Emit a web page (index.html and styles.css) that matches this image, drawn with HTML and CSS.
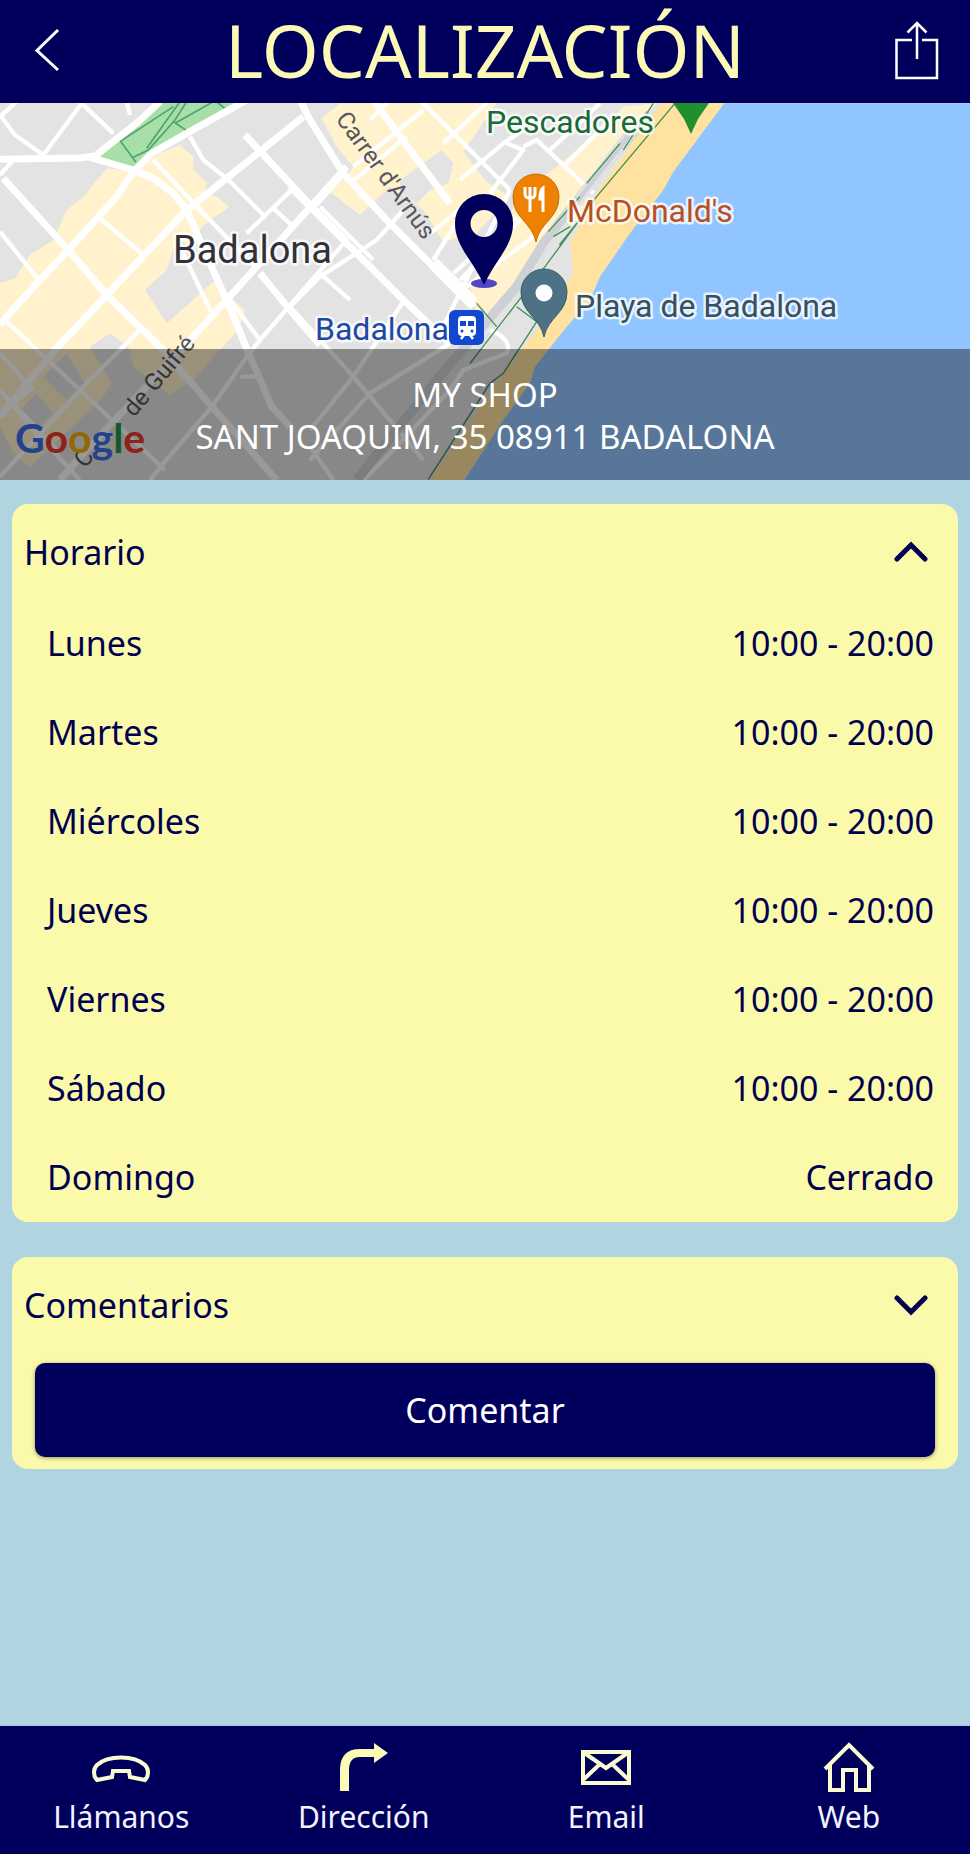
FILE: index.html
```html
<!DOCTYPE html>
<html lang="es">
<head>
	<meta charset="utf-8">
	<meta name="viewport" content="width=device-width, initial-scale=1">
	<title>Localización</title>
	<link rel="stylesheet" href="styles.css">
</head>
<body>

<header class="topbar">
	<button type="button" class="topbar-button" aria-label="Volver">
		<svg width="96" height="103" viewBox="0 0 96 103"><path d="M58 30L37 50.500L58 70" stroke-width="3"/></svg>
	</button>
	<h1>LOCALIZACIÓN</h1>
	<button type="button" class="topbar-button" aria-label="Compartir">
		<svg width="96" height="103" viewBox="0 0 96 103"><path d="M38 40H22.500V78H63V40H48M43 59V23M33.500 32.500L43 23L52.500 32.500" stroke-width="2.500"/></svg>
	</button>
</header>

<main>
	<section class="location">
		<svg class="map" viewBox="0 103 970 377" preserveAspectRatio="xMidYMid slice" role="img" aria-label="Mapa">
			<rect class="land" y="100" width="970" height="384"/>

			<!-- Old town -->
			<g transform="translate(0 100) scale(.33333)">
				<path class="block" d="M0 550L45 535L90 465L160 420L200 330L250 290L320 205L395 215L480 160L540 135L580 170L580 210L620 245L615 275L650 290L688 320L605 380L580 440L530 420L500 510L435 570L500 670L640 545L735 630L715 690L650 760L590 830L510 885L400 800L385 740L330 700L270 740L335 850L310 890L260 940L90 1100L40 1060L0 980Z"/>
				<path class="unblock" d="M130 830L200 760L255 850L200 900ZM60 930L110 880L160 940L110 990Z"/>
				<path class="park" d="M285 172L420 65L480 5H740L560 100L455 160L405 202Z"/>
				<path class="park-path" d="M350 108L408 187M360 125L520 20M400 172L445 150L525 60L560 5M440 145L540 5M520 65L560 92M525 70L640 5M650 5L680 30"/>
				<g class="street">
					<path class="wide" d="M0 178L240 174L285 168L410 70L480 5M270 172L400 210L460 235L520 280L560 330L625 480L680 600L740 745L815 920L870 980"/>
					<path class="wide" d="M740 0L560 100L455 160L400 215L350 290L205 450L120 540L15 655L0 675M910 50L680 235L560 330L320 585L165 750L40 900L0 950"/>
					<path class="wide" d="M10 235L205 450L320 585L480 740L640 925L830 1140M735 105L935 320L1040 425M1040 200L860 400L680 600L570 720L420 880L250 1060L180 1140M780 520L870 630L960 735"/>
					<path d="M0 45L45 105L130 165L245 10M0 50L50 5M245 10L340 100M380 5L390 45M0 225L40 180M0 395L120 545M300 355L430 465M425 685L250 860L0 1130M420 685L490 750M15 660L240 870L495 1110M0 760L95 865L40 910L180 1060M0 870L100 990L240 1140M460 180L600 330L770 505M570 110L610 180L680 235L790 345M885 260L740 400M820 325L880 380M540 440L635 640M690 600L780 720M1040 420L780 720L740 770L640 915L490 1090L450 1140M960 520L1050 600M720 830H780"/>
				</g>
			</g>

			<!-- Sea front -->
			<g transform="translate(290 100) scale(.33333)">
				<path class="block" d="M95 55L150 10H620L520 155L590 245L660 290L560 400L460 425L400 330L300 260L210 345L120 275L165 235L190 200L140 140ZM700 270L800 200L930 90L1000 20L1100 10L700 500L560 640L540 560Z"/>
				<path class="unblock" d="M330 240L455 150L490 190L475 250L420 270L380 310L330 280ZM690 150L730 130L780 190L730 215L695 200ZM640 10H930L820 150L760 120L700 120Z"/>
				<path class="sand" d="M1110 10H1310L1220 130L1140 250L1000 430L925 540L850 690L720 850L520 1140H420L640 820L740 690L850 520L840 430L920 280Z"/>
				<path class="sea" d="M1303 10L1150 215L1120 270L1020 400L930 530L900 600L830 680L735 800L720 850L640 960L520 1145H2100V10Z"/>
				<path class="land" d="M680 620L735 655V690L640 820L520 970L410 1130H190L450 850Z"/>
				<g class="street">
					<path class="wide" d="M30 0L60 60L160 220L290 360L440 510L550 620M0 260L170 430L340 600L480 730M160 220L60 330M250 0L330 110L480 310"/>
					<path class="huge" d="M430 490L550 610"/>
					<path d="M340 330L260 420L90 530L0 620M250 480L90 320M340 605L190 830L60 990M0 620L190 830L400 1080M480 730L240 880L60 1080M190 200L400 30M180 250L350 110M240 60L300 0M390 0L510 120L660 270M460 130L600 0M510 240L640 130L700 90M700 140L740 120L910 280M650 130L700 150L600 280M930 10L780 150M960 60L820 200M420 400L520 320M430 480L510 350M510 540L710 340M530 560L770 380M490 520L680 350M450 700L660 270M600 690Q670 720 650 760L520 810L480 870L300 1060L220 1140M60 1040L130 1140"/>
				</g>
				<path class="block" d="M570 600L680 480L850 300L880 320L790 420L620 620L590 650Z"/>
				<path class="rail" d="M1080 40L910 240L760 430L680 560L440 840L200 1140"/>
				<path class="rail thin" d="M1110 10L900 270L750 480M1020 80L860 290"/>
				<path class="footpath" d="M1155 10L920 290L765 500M990 130L890 250M870 290L775 395M860 370L808 435M840 380L790 410M765 500L540 790M560 610L620 680M680 620L740 665L640 820L600 850L415 1138M1000 150L1090 10"/>
			</g>

			<g class="map-label">
				<text class="street-name" transform="translate(335 119) rotate(54)">Carrer d'Arnús</text>
				<text class="street-name" transform="translate(85 469) rotate(-50)">C</text>
				<text class="street-name" transform="translate(134 418) rotate(-50)">de Guifré</text>
				<text class="city" x="173" y="263">Badalona</text>
				<text class="green" x="486" y="133">Pescadores</text>
				<text class="orange" x="567" y="222">McDonald's</text>
				<text class="slate" x="575" y="317">Playa de Badalona</text>
				<text class="blue" x="315" y="340">Badalona</text>
			</g>

			<!-- Station -->
			<rect x="449" y="310" width="35" height="35" rx="6" fill="#1248cf"/>
			<rect x="458" y="316" width="18" height="20" rx="4" fill="#fff"/>
			<path d="M460 321H466V326H460ZM468 321H474V326H468Z" fill="#1248cf"/>
			<circle cx="462" cy="331" r="1.500" fill="#1248cf"/>
			<circle cx="472" cy="331" r="1.500" fill="#1248cf"/>
			<path d="M461 339L464 335M473 339L470 335" stroke="#fff" stroke-width="2.500"/>

			<!-- Pins -->
			<path d="M673 103H709L698 119L691 134L684 119Z" fill="#228f2f"/>
			<path d="M536 174A23 23 0 0 0 513 197C513 218 532 222 536 242C540 222 559 218 559 197A23 23 0 0 0 536 174Z" fill="#ee8100" stroke="#c66b08"/>
			<path d="M525 187V194Q525 198 530 198Q535 198 535 194V187M530 187V212M543 212V188Q540 190 540 199H543" fill="none" stroke="#fff" stroke-width="3"/>
			<path d="M544 269A23 23 0 0 0 521 292C521 313 540 317 544 337C548 317 567 313 567 292A23 23 0 0 0 544 269Z" fill="#4d7185" stroke="#395b6c"/>
			<circle cx="544" cy="293" r="8.500" fill="#fff"/>
			<ellipse cx="484" cy="283.500" rx="13" ry="4.500" fill="#5146c4"/>
			<path fill-rule="evenodd" d="M484 194A29 29 0 0 0 455 224C455 246 474 262 484 285C494 262 513 246 513 224A29 29 0 0 0 484 194ZM484 210A13.500 13.500 0 1 1 484 237A13.500 13.500 0 1 1 484 210Z" fill="#00005c"/>

			<text class="brand" x="15" y="453"><tspan fill="#3d6fe8">G</tspan><tspan fill="#ea3a2c">o</tspan><tspan fill="#f5ae05">o</tspan><tspan fill="#3d6fe8">g</tspan><tspan fill="#259545">l</tspan><tspan fill="#ea3a2c">e</tspan></text>
		</svg>
		<address class="address">MY SHOP<br>SANT JOAQUIM, 35 08911 BADALONA</address>
	</section>

	<div class="cards">
		<section class="card">
			<h2>
				<button type="button" class="card-toggle" aria-expanded="true">Horario
					<svg width="34" height="22" viewBox="0 0 34 22"><path d="M3 18L17 4L31 18"/></svg>
				</button>
			</h2>
			<table class="hours">
				<tr><th scope="row">Lunes</th><td>10:00 - 20:00</td></tr>
				<tr><th scope="row">Martes</th><td>10:00 - 20:00</td></tr>
				<tr><th scope="row">Miércoles</th><td>10:00 - 20:00</td></tr>
				<tr><th scope="row">Jueves</th><td>10:00 - 20:00</td></tr>
				<tr><th scope="row">Viernes</th><td>10:00 - 20:00</td></tr>
				<tr><th scope="row">Sábado</th><td>10:00 - 20:00</td></tr>
				<tr><th scope="row">Domingo</th><td>Cerrado</td></tr>
			</table>
		</section>

		<section class="card">
			<h2>
				<button type="button" class="card-toggle" aria-expanded="false">Comentarios
					<svg width="34" height="22" viewBox="0 0 34 22"><path d="M3 4L17 18L31 4"/></svg>
				</button>
			</h2>
			<button type="button" class="comment-button">Comentar</button>
		</section>
	</div>
</main>

<nav class="actions">
	<a href="#llamar">
		<svg width="60" height="52" viewBox="0 0 60 52"><path class="line" d="M6 38C2 34 2 27 6 23C17 13 43 13 54 23C58 27 58 34 54 38L39 35L38 29H22L21 35Z"/></svg>
		Llámanos
	</a>
	<a href="#direccion">
		<svg width="60" height="52" viewBox="0 0 60 52"><path class="solid" d="M6 49V28Q6 7 26 7H40V1L54 11L40 21V15H26Q15 15 15 28V49Z"/></svg>
		Dirección
	</a>
	<a href="#email">
		<svg width="60" height="52" viewBox="0 0 60 52"><path class="line" d="M7 10H53V41H7ZM7 10L30 26L53 10M7 38L24 22M53 38L36 22"/></svg>
		Email
	</a>
	<a href="#web">
		<svg width="60" height="52" viewBox="0 0 60 52"><path class="line" d="M6 27L30 3L54 27M11 23V48H24V28H37V48H50V23"/></svg>
		Web
	</a>
</nav>

</body>
</html>
```
FILE: styles.css
```css
* {
	box-sizing: border-box;
}

body {
	display: flex;
	flex-direction: column;
	min-height: 100vh;
	margin: 0;
	background: #b0d5e1;
	color: #00004f;
	font-family: "Noto Sans", sans-serif;
	font-size: 34px;
}

button {
	margin: 0;
	padding: 0;
	border: 0;
	background: none;
	color: inherit;
	font: inherit;
}

/* Header */
.topbar {
	display: flex;
	justify-content: space-between;
	height: 103px;
	background: #00005c;
}

.topbar h1 {
	margin: 0;
	color: #fbf9b5;
	font-size: 73px;
	font-weight: normal;
	line-height: 100px;
}

.topbar-button svg {
	display: block;
	fill: none;
	stroke: #fff;
}

main {
	flex: 1;
}

/* Map */
.location {
	position: relative;
}

.map {
	display: block;
	width: 100%;
	height: 377px;
}

.land,
.unblock {
	fill: #e3e3e4;
}

.block {
	fill: #fff2cc;
}

.park {
	fill: #a8dfa8;
}

.park-path {
	fill: none;
	stroke: #4fa36c;
	stroke-width: 5;
}

.sand {
	fill: #ffe2a0;
}

.sea {
	fill: #91c5ff;
}

.street {
	fill: none;
	stroke: #fff;
	stroke-width: 13;
	stroke-linejoin: round;
}

.street .wide {
	stroke-width: 21;
}

.street .huge {
	stroke-width: 38;
}

.rail {
	fill: none;
	stroke: #cdd0d4;
	stroke-width: 28;
}

.rail.thin {
	stroke: #e1e2e4;
	stroke-width: 8;
}

.footpath {
	fill: none;
	stroke: #3f9155;
	stroke-width: 4;
}

.map-label {
	font-family: Roboto, sans-serif;
	font-size: 32px;
	paint-order: stroke;
	stroke: rgba(255, 255, 255, .8);
	stroke-width: 5px;
	stroke-linejoin: round;
}

.street-name {
	fill: #55585c;
	stroke: none;
	font-size: 24px;
}

.city {
	fill: #303237;
	font-size: 38px;
}

.green {
	fill: #176b35;
}

.orange {
	fill: #b9501c;
}

.slate {
	fill: #35505e;
}

.blue {
	fill: #1c49a5;
}

.brand {
	font-family: Lato, sans-serif;
	font-size: 41px;
	font-weight: bold;
}

.address {
	position: absolute;
	right: 0;
	bottom: 0;
	left: 0;
	padding: 25px 16px 22px;
	background: rgba(0, 0, 0, .4);
	color: #fff;
	font-size: 33px;
	font-style: normal;
	line-height: 42px;
	text-align: center;
}

/* Cards */
.cards {
	display: grid;
	gap: 35px;
	padding: 24px 12px;
}

.card {
	border-radius: 16px;
	background: #fbfaab;
}

.card h2 {
	margin: 0;
	font-size: 34px;
	font-weight: normal;
}

.card-toggle {
	display: flex;
	align-items: center;
	justify-content: space-between;
	width: 100%;
	height: 95px;
	padding: 0 30px 0 12px;
}

.card-toggle svg {
	fill: none;
	stroke: #00004f;
	stroke-width: 5;
	stroke-linecap: round;
}

.hours {
	width: 100%;
	border-collapse: collapse;
}

.hours th,
.hours td {
	height: 89px;
	padding: 0 24px 2px 35px;
	font-weight: normal;
	text-align: left;
}

.hours td {
	text-align: right;
}

.comment-button {
	display: block;
	width: calc(100% - 46px);
	height: 94px;
	margin: 11px 23px 0;
	border-radius: 10px;
	background: #00005c;
	box-shadow: 0 1px 4px rgba(0, 0, 0, .4);
	color: #fff;
}

.card:last-child {
	padding-bottom: 12px;
}

/* Bottom bar */
.actions {
	display: grid;
	grid-template-columns: repeat(4, 1fr);
	height: 130px;
	border-top: 2px solid #adc9f2;
	background: #00005c;
}

.actions a {
	display: flex;
	flex-direction: column;
	align-items: center;
	padding-top: 16px;
	color: #f2f3ff;
	font-size: 30px;
	line-height: 46px;
	text-decoration: none;
}

.actions .line {
	fill: none;
	stroke: #fbfbd2;
	stroke-width: 4;
}

.actions .solid {
	fill: #fbf9b5;
}
```
